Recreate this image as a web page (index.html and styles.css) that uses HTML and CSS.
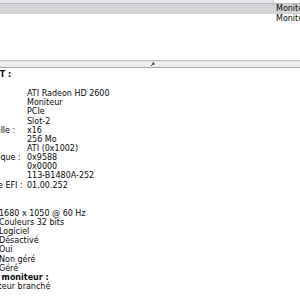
FILE: index.html
```html
<!DOCTYPE html>
<html lang="fr">
<head>
	<meta charset="UTF-8">
	<title>Informations système</title>
<link rel="stylesheet" href="styles.css">
</head>
<body>
<div class="win">
	<div class="list">
		<div class="head"><span class="hcell"></span></div>
		<div class="row sel"><span class="cell">Moniteur</span></div>
		<div class="row"><span class="cell">Moniteur</span></div>
	</div>
	<div class="split">
		<svg width="5" height="5" viewBox="0 0 5 5"><path d="M1 4 L4 1 M2 1 H4 V3" stroke="#333" stroke-width="1" fill="none"/></svg>
	</div>
	<div class="detail">
		<div class="sheet">
			<div class="line hd lv1">ATI Radeon HD 2600 XT :</div>
			<div class="line"></div>
			<div class="kv"><span class="k">Type de jeu de puces :</span><span class="v">ATI Radeon HD 2600</span></div>
			<div class="kv"><span class="k">Type :</span><span class="v">Moniteur</span></div>
			<div class="kv"><span class="k">Bus :</span><span class="v">PCIe</span></div>
			<div class="kv"><span class="k">Logement :</span><span class="v">Slot-2</span></div>
			<div class="kv"><span class="k">Largeur de liaison actuelle :</span><span class="v">x16</span></div>
			<div class="kv"><span class="k">VRAM (totale) :</span><span class="v">256 Mo</span></div>
			<div class="kv"><span class="k">Fournisseur :</span><span class="v">ATI (0x1002)</span></div>
			<div class="kv"><span class="k">Identifiants du périphérique :</span><span class="v">0x9588</span></div>
			<div class="kv"><span class="k">ID de révision :</span><span class="v">0x0000</span></div>
			<div class="kv"><span class="k">ROM Revision :</span><span class="v">113-B1480A-252</span></div>
			<div class="kv"><span class="k">Niveau de la ROM native EFI :</span><span class="v">01.00.252</span></div>
			<div class="line hd lv2">Moniteurs :</div>
			<div class="line hd lv3">Cinema HD :</div>
			<div class="kv sub"><span class="k">Résolution :</span><span class="v">1680 x 1050 @ 60 Hz</span></div>
			<div class="kv sub"><span class="k">Profondeur :</span><span class="v">Couleurs 32 bits</span></div>
			<div class="kv sub"><span class="k">Core Image :</span><span class="v">Logiciel</span></div>
			<div class="kv sub"><span class="k">Recopie vidéo :</span><span class="v">Désactivé</span></div>
			<div class="kv sub"><span class="k">En ligne :</span><span class="v">Oui</span></div>
			<div class="kv sub"><span class="k">Quartz Extreme :</span><span class="v">Non géré</span></div>
			<div class="kv sub"><span class="k">Rotation :</span><span class="v">Géré</span></div>
			<div class="line hd lv4">Connecteur de moniteur :</div>
			<div class="kv sub2"><span class="k">État :</span><span class="v">Aucun moniteur branché</span></div>
		</div>
	</div>
</div>
</body>
</html>
```

FILE: styles.css
```css
*{margin:0;padding:0;box-sizing:border-box;}
body{width:300px;height:300px;overflow:hidden;background:#fff;font-family:"DejaVu Sans",sans-serif;font-size:8px;color:#0a0a0a;}
.win{display:flex;flex-direction:column;height:300px;}

.list{height:60px;background:#fff;}
.head{height:4px;background:#e4e7eb;border-bottom:1px solid #b9bcc0;display:flex;justify-content:flex-end;}
.hcell{width:27px;height:3px;background:#fff;border-left:1px solid #c4c4c4;}
.row{height:10px;display:flex;}
.row.sel{background:#d4d4d4;}
.cell{margin-left:276px;line-height:10px;white-space:nowrap;}

.split{height:8px;background:linear-gradient(#dcdcdc,#f3f3f3 30%,#e9e9e9);border-top:1px solid #c2c2c2;border-bottom:1px solid #a9a9a9;display:flex;justify-content:center;align-items:center;padding-left:4px;}
.split svg{display:block;}

.detail{flex:1;overflow:hidden;padding-top:2px;}
.sheet{margin-left:-150px;width:600px;}
.line{height:9.15px;line-height:9.15px;white-space:nowrap;}
.line.hd + .line{height:10px;}
.hd{font-weight:bold;}
.lv1{padding-left:49px;}
.lv2{padding-left:80px;}
.lv3{padding-left:88px;}
.lv4{padding-left:83px;}
.kv{display:flex;height:9.15px;line-height:9.15px;white-space:nowrap;}
.kv .k{width:177px;padding-left:54px;overflow:hidden;}
.kv.sub .k{width:149px;}
.kv.sub2 .k{width:101px;}
```
